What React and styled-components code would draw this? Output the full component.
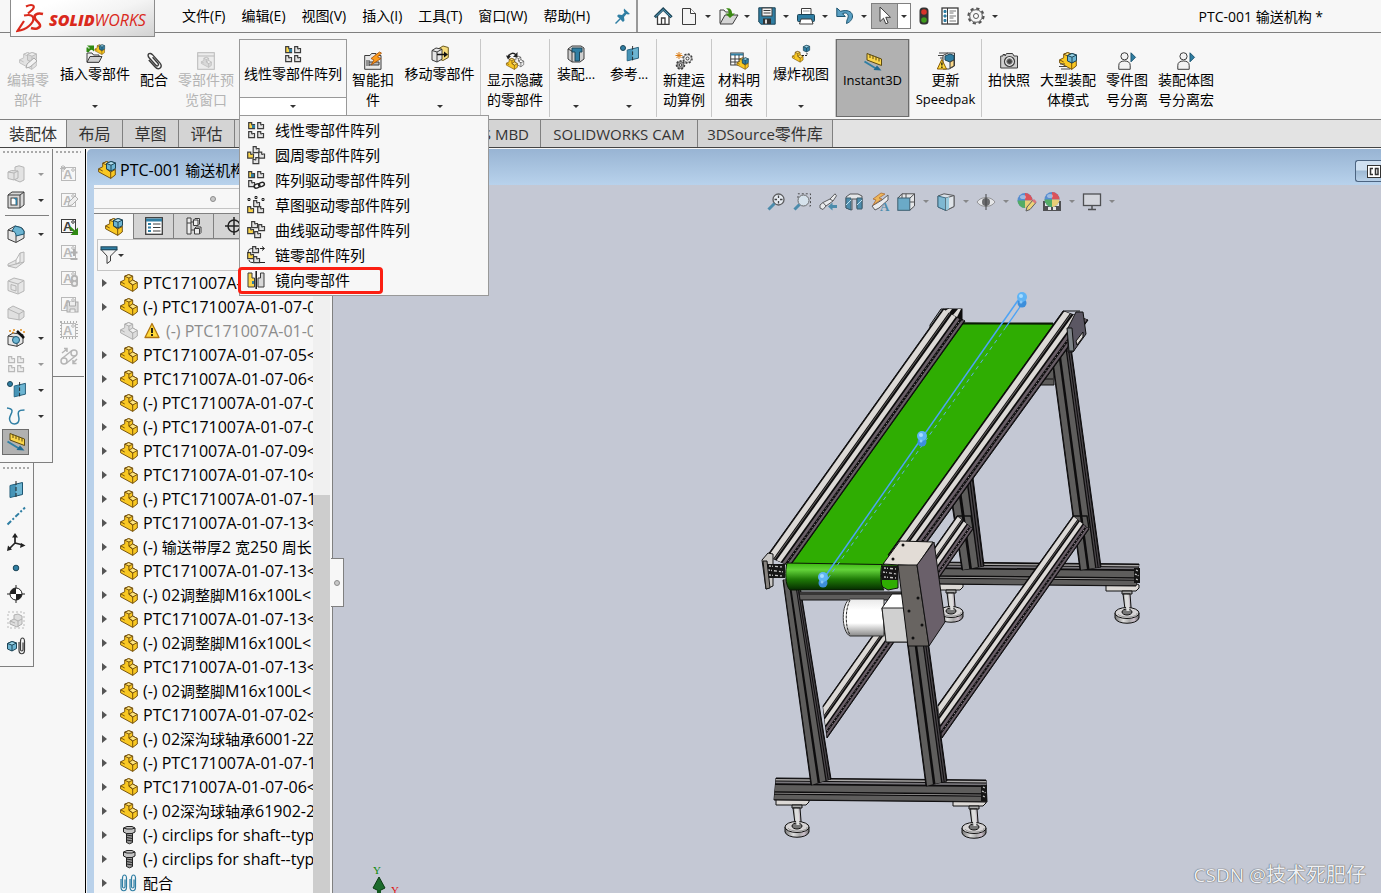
import React, { useState } from 'react';
import styled, { createGlobalStyle, css } from 'styled-components';

const GlobalStyle = createGlobalStyle`
  * {
    box-sizing: border-box;
  }
  body {
    margin: 0;
    background: #f7f7f7;
    color: #000;
    font-family: 'Open Sans', 'Noto Sans CJK SC', sans-serif;
    font-size: 14px;
  }
  button, input {
    font: inherit;
    color: inherit;
    margin: 0;
    padding: 0;
    border: 0;
    background: none;
  }
`;

const AppContainer = styled.div`
  height: 100vh;
  display: flex;
  flex-direction: column;
  overflow: hidden;
`;

const Svg = styled.svg`
  width: 18px;
  height: 18px;
  flex: none;
  display: block;
  overflow: visible;
`;

const Caret = styled.span`
  width: 0;
  height: 0;
  flex: none;
  border: 3px solid transparent;
  border-top-color: ${(p) => p.$color || '#333'};
  border-bottom: 0;
`;

const HanText = styled.span`
  font-size: ${(p) => p.$size}px;
`;

/* ---------- header ---------- */

const Header = styled.header`
  position: relative;
  display: flex;
  height: 33px;
  flex: none;
  border-bottom: 1px solid #808080;
`;

const Logo = styled.div`
  position: absolute;
  left: 10px;
  top: 0;
  z-index: 2;
  width: 145px;
  height: 37px;
  display: flex;
  align-items: center;
  padding-left: 5px;
  background: linear-gradient(160deg, #fff 20%, #f4f4f4 55%, #d2d2d2);
  border: solid #8c8c8c;
  border-width: 0 1px 1px;
  color: #da291c;
`;

const LogoText = styled.span`
  margin-left: 5px;
  padding-top: 4px;
  font-style: italic;
  font-weight: 400;
  font-size: 16px;
  line-height: 20px;
  b {
    font-weight: 800;
  }
`;

const MenuBar = styled.nav`
  display: flex;
  align-items: center;
  gap: 16px;
  width: 638px;
  flex: none;
  padding-left: 182px;
  border-right: 2px solid #999;
  button {
    white-space: nowrap;
    line-height: 20px;
  }
`;

const PinButton = styled.button`
  margin-left: 8px;
`;

const QuickBar = styled.div`
  display: flex;
  align-items: center;
  padding-left: 12px;
`;

const QuickButton = styled.button`
  width: 26px;
  height: 26px;
  display: flex;
  align-items: center;
  justify-content: center;
`;

const QuickCaret = styled.button`
  width: 12px;
  height: 26px;
  margin-right: 1px;
  display: flex;
  align-items: center;
  justify-content: center;
`;

const SelectGroup = styled.div`
  display: flex;
  border: 1px solid #808080;
  button:first-child {
    height: 24px;
    background: #b4b4b4;
    border-right: 1px solid #808080;
  }
  button:last-child {
    height: 24px;
    margin: 0;
    background: #fff;
  }
`;

const DocTitle = styled.div`
  margin-left: auto;
  align-self: center;
  padding-right: 58px;
  white-space: nowrap;
`;

/* ---------- ribbon ---------- */

const Ribbon = styled.section`
  display: flex;
  flex: none;
  height: 86px;
  padding-top: 6px;
`;

const RibbonSeparator = styled.span`
  width: 1px;
  height: 78px;
  background: #c8c8c8;
`;

const RibbonLabel = styled.span`
  margin-top: ${(p) => (p.$menu ? 1 : 0)}px;
`;

const RibbonButton = styled.button`
  width: ${(p) => p.$width}px;
  height: 78px;
  flex: none;
  display: flex;
  flex-direction: column;
  align-items: center;
  padding-top: ${(p) => (p.$menu ? 6 : 13)}px;
  font-size: 13px;
  line-height: 19px;
  white-space: pre;
  color: ${(p) => (p.disabled ? '#b4b4b4' : '#000')};
  ${Caret} {
    margin-top: auto;
    margin-bottom: 9px;
  }
  ${(p) =>
    p.$pressed &&
    css`
      padding-top: 13px;
      background: #b1b1b1;
      border: 1px solid #6c6c6c;
    `}
`;

const SplitWrap = styled.div`
  position: relative;
  width: 108px;
  height: 76px;
  margin-left: 1px;
  flex: none;
  border: 1px solid #999;
`;

const SplitTop = styled.button`
  display: flex;
  flex-direction: column;
  align-items: center;
  width: 100%;
  height: 57px;
  padding-top: 5px;
  line-height: 19px;
  white-space: nowrap;
`;

const SplitBottom = styled.button`
  display: flex;
  width: 100%;
  height: 18px;
  align-items: center;
  justify-content: center;
  background: #fff;
  border-top: 1px solid #999;
`;

const PatternMenu = styled.ul`
  position: absolute;
  z-index: 10;
  left: -1px;
  top: 75px;
  width: 250px;
  margin: 0;
  padding: 1px 2px 3px;
  list-style: none;
  background: #f7f7f7;
  border: 1px solid #999;
`;

const PatternItem = styled.li`
  position: relative;
  button {
    display: flex;
    align-items: center;
    gap: 10px;
    width: 100%;
    height: 25px;
    padding-left: 5px;
    font-size: 15px;
    line-height: 20px;
  }
`;

const Highlight = styled.span`
  position: absolute;
  left: -4px;
  top: 0;
  width: 145px;
  height: 27px;
  border: 3px solid #fb1f12;
  border-radius: 4px;
  pointer-events: none;
`;

/* ---------- command tabs ---------- */

const TabBar = styled.div`
  display: flex;
  flex: none;
  height: 29px;
  background: #e3e3e3;
  border-top: 1px solid #808080;
  border-bottom: 1px solid #444;
`;

const Tab = styled.button`
  width: ${(p) => p.$width}px;
  flex: none;
  font-size: 15px;
  line-height: 26px;
  white-space: nowrap;
  color: #333;
  background: ${(p) => (p.$active ? '#f7f7f7' : '#d4d4d4')};
  border-right: 1px solid #808080;
`;

/* ---------- left tool strips ---------- */

const Body = styled.div`
  display: flex;
  flex: 1;
  min-height: 0;
  padding-top: 1px;
`;

const Strips = styled.aside`
  width: 86px;
  flex: none;
  border-right: 1px solid #000;
`;

const StripRow = styled.div`
  display: flex;
  align-items: flex-start;
`;

const Strip = styled.div`
  width: ${(p) => p.$width}px;
  padding: ${(p) => (p.$lower ? 4 : 2)}px 0 7px;
  border-bottom: 1px solid #808080;
  border-right: ${(p) => (p.$open ? '0' : '1px solid #808080')};
  &::before {
    content: '';
    display: block;
    height: 2px;
    margin: 0 3px 8px;
    background: repeating-linear-gradient(90deg, #aaa 0 2px, transparent 2px 4px);
  }
`;

const StripItem = styled.div`
  display: flex;
  align-items: center;
  height: 26px;
  padding-left: 2px;
  button {
    width: 27px;
    height: 26px;
    display: flex;
    align-items: center;
    justify-content: center;
    background: ${(p) => (p.$pressed ? '#b1b1b1' : 'none')};
    border: ${(p) => (p.$pressed ? '1px solid #6c6c6c' : '0')};
  }
  ${Caret} {
    margin-left: 9px;
  }
`;

const StripRule = styled.div`
  height: 1px;
  margin: 2px 3px 5px 5px;
  background: #808080;
`;

/* ---------- document window ---------- */

const DocWindow = styled.main`
  flex: 1;
  min-width: 0;
  margin-left: 1px;
  display: flex;
  flex-direction: column;
  padding-left: 7px;
  background: #b9d1ea;
  border-radius: 5px 0 0 0;
  overflow: hidden;
`;

const WindowTitle = styled.div`
  height: 36px;
  flex: none;
  display: flex;
  align-items: center;
  gap: 4px;
  margin-left: -7px;
  padding: 6px 0 0 11px;
  font-size: 16px;
  line-height: 24px;
  background: linear-gradient(#98b4d3, #b8d2ec);
`;

const WindowButton = styled.button`
  margin-left: auto;
  align-self: flex-start;
  margin-top: 5px;
  width: 26px;
  height: 22px;
  padding-left: 11px;
  border: 1px solid #4c6481;
  border-right: 0;
  border-radius: 3px 0 0 3px;
  background: linear-gradient(#cfe0f1 45%, #9db9d4 50%, #b8d0e8);
`;

const Workspace = styled.div`
  flex: 1;
  min-height: 0;
  display: flex;
`;

const Panel = styled.section`
  position: relative;
  z-index: 1;
  width: 239px;
  flex: none;
  display: flex;
  flex-direction: column;
  background: #f7f7f7;
  border-right: 1px solid #808080;
`;

const PanelGrip = styled.div`
  height: 21px;
  margin: 3px 0 4px;
  flex: none;
  display: flex;
  align-items: center;
  justify-content: center;
  border: solid #c4c4c4;
  border-width: 1px 0;
`;

const Dot = styled.span`
  width: 6px;
  height: 6px;
  border-radius: 50%;
  border: 1px solid #8c8c8c;
  background: #c8c8c8;
`;

const PanelTabs = styled.div`
  display: flex;
  flex: none;
  height: 26px;
  border-top: 1px solid #808080;
  background: #d4d4d4;
`;

const PanelTab = styled.button`
  width: 40px;
  display: flex;
  align-items: center;
  justify-content: center;
  background: ${(p) => (p.$active ? '#f7f7f7' : '#d4d4d4')};
  border-right: 1px solid #808080;
  border-bottom: ${(p) => (p.$active ? '0' : '1px solid #808080')};
`;

const FilterBar = styled.label`
  display: flex;
  align-items: center;
  flex: none;
  height: 32px;
  margin: 0 3px;
  padding-left: 2px;
  border: 1px solid #c4c4c4;
  input {
    width: 100%;
    min-width: 0;
    outline: 0;
  }
`;

const TreeArea = styled.div`
  flex: 1;
  min-height: 0;
  display: flex;
  overflow: hidden;
`;

const Tree = styled.ul`
  width: 219px;
  margin: 0;
  padding: 0;
  list-style: none;
  overflow: hidden;
`;

const TreeRow = styled.li`
  display: flex;
  align-items: center;
  height: 24px;
  padding-left: 8px;
  gap: 5px;
  font-size: 16px;
  line-height: 24px;
  white-space: pre;
  color: ${(p) => (p.$dim ? '#8c8c8c' : '#000')};
`;

const Twisty = styled.button`
  width: 13px;
  height: 24px;
  flex: none;
  display: flex;
  align-items: center;
  &::before {
    content: '';
    border: 4px solid transparent;
    border-left: 5px solid #555;
    border-right: 0;
    visibility: ${(p) => (p.$hidden ? 'hidden' : 'visible')};
  }
`;

const ScrollTrack = styled.div`
  width: 17px;
  display: flex;
  flex-direction: column;
  justify-content: flex-end;
  background: #f0f0f0;
`;

const ScrollThumb = styled.div`
  height: 64%;
  background: #cdcdcd;
`;

const PanelHandle = styled.button`
  position: absolute;
  left: 237px;
  top: 373px;
  width: 13px;
  height: 49px;
  display: flex;
  align-items: center;
  justify-content: center;
  background: #f7f7f7;
  border: 1px solid #808080;
  border-left: 0;
`;

const Viewport = styled.section`
  position: relative;
  flex: 1;
  min-width: 0;
  display: flex;
  flex-direction: column;
  background: #c4c8d4;
  overflow: hidden;
`;

const ViewBar = styled.div`
  display: flex;
  align-items: center;
  flex: none;
  height: 33px;
  padding-left: 430px;
  opacity: 0.8;
  button {
    width: 26px;
    height: 26px;
    flex: none;
    display: flex;
    align-items: center;
    justify-content: center;
  }
  ${Caret} {
    margin: 0 4px;
  }
`;

const Scene = styled.svg`
  display: block;
  flex: 1;
  width: 100%;
  min-height: 0;
`;

const Watermark = styled.div`
  position: absolute;
  right: 15px;
  bottom: 5px;
  font-size: 19px;
  line-height: 26px;
  color: #eef0f4;
  text-shadow: 0 0 1px #555, 0 0 1px #555;
`;

/* ---------- icons, drawn on an 18 x 18 grid ---------- */

const K = '#3c3c3c';
const B = '#2f7ea3';
const BL = '#6db5d2';
const Y = '#f9c823';

const Block = ({ fill = Y, light = '#fde27a', stroke = '#6b4708' }) => (
  <g stroke={stroke} strokeLinejoin="round" strokeWidth=".9">
    <path d="M4.700 2.200 8.700 .6 12.700 2.200V6L17.300 8.500V14L12.700 17.400 .6 10.800V7.800L4.700 5.800Z" fill={fill} />
    <path d="M4.700 2.200 8.700 .6 12.700 2.200 8.900 4ZM8.900 8.200 12.700 6 17.300 8.500 12.700 11Z" fill={light} />
    <path d="M8.900 4V8.200L12.700 11V17.400M.6 7.800 4.700 10" fill="none" />
  </g>
);

const Cube = ({ x = 8, y = 0, fill = B, light = '#9ad6ea', stroke = '#1d4557' }) => (
  <g transform={`translate(${x} ${y})`} stroke={stroke} strokeLinejoin="round">
    <path d="M.5 2.500 5 .5 9.500 2v5.500L5 10 .5 8Z" fill={fill} />
    <path d="M.5 2.500 5 .5 9.500 2 5 4.200Z" fill={light} />
    <path d="M5 4.200V10" fill="none" />
  </g>
);

// notched plate used by every pattern icon
const Notch = ({ x, y, fill = '#e4e4e4', stroke = K, flip }) => (
  <path
    transform={`translate(${x} ${y})${flip ? ' translate(7 0) scale(-1 1)' : ''}`}
    d="M.7 .7h3v1.500c0 1 .8 1 1.300.3h1.500v4.200H.7Z"
    fill={fill}
    stroke={stroke}
    strokeWidth="1.200"
  />
);

const Note = ({ children, color = '#b9b9b9' }) => (
  <>
    <rect x="1.500" y="2.500" width="14" height="13" fill="none" stroke={color} />
    <text x="3" y="14" fontFamily="Liberation Sans, sans-serif" fontSize="13" fontWeight="bold" fill={color}>A</text>
    <circle cx="13" cy="5" r="1.300" fill="none" stroke={color} />
    {children}
  </>
);

const Person = () => (
  <g stroke={K} fill="#f2f2f2">
    <path d="M.8 17.300v-4C.8 10.500 3 9 6.500 9s5.700 1.500 5.700 4.300v4Z" />
    <circle cx="6.500" cy="4.300" r="3.600" />
    <path d="M13 .8 17.500 5.300 13 9.800Z" fill={B} stroke="#1d5672" />
  </g>
);

const Ruler = () => (
  <>
    <path d="M3 .5 17.500 6V12.500L3 7Z" fill="#fbd64b" stroke="#5c4a10" />
    <path d="M6 1.500v3.500M9 2.600v3.500M12 3.800v3.500M15 5v3.500" stroke="#5c4a10" />
    <path d="M.5 8.500 12 15.500" stroke={B} strokeWidth="2" />
    <path d="M17.500 17.500 9.500 17 13 12.500Z" fill="#1f6a92" />
  </>
);

const Plane = ({ x = 0 }) => (
  <g transform={`translate(${x} 0)`}>
    <path d="M3 4.500 15.500 1.500v12L3 16.500Z" fill={BL} stroke="#1d5672" />
    <path d="M3 4.500 9 3v12L3 16.500Z" fill={B} opacity=".6" />
    <path d="M9 0v18" stroke="#222" strokeDasharray="4 2" />
  </g>
);

const Clip = ({ color = K, x = 0 }) => (
  <path
    transform={`translate(${x} 0)`}
    d="M2 5v8c0 5 5.500 5 5.500 0V4C7.500 0 3.500 0 3.500 4v8.500c0 2 2.500 2 2.500 0V5.500"
    fill="none"
    stroke={color}
    strokeWidth="1.200"
  />
);

const Gear = ({ x, y, r, fill = '#f2f2f2' }) => (
  <g transform={`translate(${x} ${y})`} stroke={K} fill={fill}>
    <circle r={r} strokeWidth="1.500" strokeDasharray="2 1.500" />
    <circle r={r - 0.7} strokeWidth=".6" />
    <circle r={r / 3} fill="#fff" />
  </g>
);

const Ball = () => (
  <g>
    <circle cx="8" cy="7.500" r="7.500" fill="#3c7fd0" />
    <path d="M8 7.500V0a7.500 7.500 0 0 1 7.500 7.500Z" fill="#e0363c" />
    <path d="M8 7.500H.5A7.500 7.500 0 0 0 8 15Z" fill="#37a64a" />
    <path d="M8 7.500h7.500A7.500 7.500 0 0 1 8 15Z" fill="#f0d060" />
    <ellipse cx="6" cy="4" rx="3" ry="2" fill="#fff" opacity=".45" />
  </g>
);

const icons = {
  part: <Block />,
  partGray: <Block fill="#dedede" light="#efefef" stroke="#a8a8a8" />,
  assembly: <><Block /><Cube x={8} y={0} fill={BL} light="#b5e2f2" /></>,
  pin: <g transform="translate(-1 -1)"><path d="M11 2.500 17 8l-2 .5-1.500-.5-2.500 3 .5 3.500L10 16 4 10l1.500-1.500 3.500.5L11.500 6.500l-.8-1.500Z" fill={B} /><path d="M7 13 2.500 17.500" stroke={B} strokeWidth="1.500" /></g>,
  home: <><path d="M3.500 9v8.300h11.500V9" fill="#fff" stroke={K} strokeWidth="1.300" /><path d="M7.500 17v-6H11v6" fill="none" stroke={K} strokeWidth="1.300" /><path d="M.8 10.200 9.200 2l8.400 8.200" fill="none" stroke="#1d4557" strokeWidth="3" /><path d="M1.500 9.800 9.200 2.500l7.700 7.300" fill="none" stroke="#5ba4c5" /></>,
  file: <><path d="M2.500 1.500h8l5 5v11h-13Z" fill="#f4f4f4" stroke={K} strokeLinejoin="round" /><path d="M10.500 1.500v5h5" fill="#fff" stroke={K} /></>,
  open: <><path d="M1 16V3h4l1.500 2H12v3" fill="#eee" stroke={K} /><path d="M1 17 6 8h13l-5.500 9Z" fill="#d5d5d5" stroke={K} /><path d="M7 1.500c4-1 6 1 6 5h3l-5 4.500L6.500 6.500H9.500C10 4 9 2.500 7 1.500Z" fill="#3a8a12" /></>,
  save: <><path d="M.8 .8h16.400v16.400H3L.8 15Z" fill={B} stroke="#1d4557" /><rect x="4" y="1" width="10" height="8" fill="#f4f4f4" stroke={K} /><path d="M5.500 3.500h7M5.500 6h7" stroke={K} /><rect x="5" y="11.500" width="8" height="5.500" fill="#333" /><rect x="7" y="12.500" width="2" height="4" fill="#ddd" /></>,
  print: <><path d="M4.500 8V1.500h9.500V8" fill="#fff" stroke={K} /><path d="M6 4h6.500" stroke="#999" /><rect x=".5" y="7.500" width="17" height="7" rx="1" fill={B} stroke="#1d4557" /><path d="M4 12h10.500l1.500 5H2.500Z" fill="#fff" stroke={K} /></>,
  undo: <path d="M.8 1v8.500h8.500L6.500 6.700C11 4.500 14 8 11 13l-.5 3.500C20 13 18.500 .5 4.500 4.300Z" fill="#5aa0c4" stroke="#1d5672" strokeLinejoin="round" />,
  cursor: <path d="M4 0v14.500l3.500-3.300 2.300 5.600 2.300-1-2.300-5.500H14.500Z" fill="#fff" stroke={K} strokeLinejoin="round" />,
  traffic: <><rect x="4.500" y=".5" width="9" height="17" rx="3.500" fill="#333" /><circle cx="9" cy="5" r="2.800" fill="#d8342a" /><circle cx="9" cy="13" r="2.800" fill="#3f9c1c" /></>,
  list: <><rect x="1" y="1" width="16" height="16" fill="#fff" stroke={K} strokeWidth="1.300" /><path d="M6.500 1v16" stroke={K} /><path d="M8.500 4h6.500M8.500 9h6.500M8.500 14h6.500M8.500 6h4M8.500 11h4" stroke="#777" /><path d="M3 3.500h2v2H3ZM3 8h2v2H3ZM3 12.500h2v2H3Z" fill={B} stroke={B} /></>,
  gear: <><circle cx="9" cy="9" r="7.500" fill="none" stroke="#555" strokeWidth="2.200" strokeDasharray="3.200 2.690" /><circle cx="9" cy="9" r="6.300" fill="#f7f7f7" stroke="#555" /><circle cx="9" cy="9" r="2.500" fill="#fff" stroke="#555" /></>,

  editPart: <><Block fill="#e2e2e2" light="#eee" stroke="#bdbdbd" /><Cube x={8} y={0} fill="#d8d8d8" light="#eee" stroke="#bdbdbd" /><path d="m7 16 1-4 7-6 3 3-7 6Z" fill="#f3f3f3" stroke="#aaa" /></>,
  insertPart: <><path d="M1 17V8h5l1.500 2H13v7Z" fill="#eee" stroke={K} /><path d="M1 17.300 4 11.500h12l-3 5.800Z" fill="#cfcfcf" stroke={K} /><path d="M1.500 7V2.500M2 7C2.500 5 4 3.500 7 3.500" fill="none" stroke="#2f8a12" strokeWidth="2" /><path d="M1 .5h7v6Z" fill="#2f8a12" /><g transform="translate(8.500 -.5) scale(.58)"><Block /><Cube /></g></>,
  mate: <g transform="rotate(-42 9 9) translate(3.500 -1) scale(1.150)"><Clip x={0} /></g>,
  preview: <><rect x=".7" y=".7" width="16.600" height="16.600" fill="#ececec" stroke="#b9b9b9" /><path d="M.7 4h16.600" stroke="#b9b9b9" /><g transform="translate(4 5) scale(.6)"><Block fill="#d8d8d8" light="#eee" stroke="#b0b0b0" /></g></>,
  linear: <><Notch x={1} y={1} fill="#fbd64b" /><Notch x={10} y={1} /><Notch x={1} y={10} /><Notch x={10} y={10} /><path d="M5 4h3v3H5Z" fill={B} /></>,
  fastener: <><path d="M.7 3.500H6l1.500-2H12v2h5v13.800H.7Z" fill="#e8e8e8" stroke={K} /><path d="M3 8v6M5 8v6M5 10h10v3H5" fill="#bbb" stroke={K} /><path d="M15.500 0 7 6.500l3 1.500-3 5 10-6.500-3.500-1.500L17.500 1Z" fill="#fb9b1c" stroke="#a14a05" strokeWidth=".8" /></>,
  move: <><path d="M8 3.500 12 1l5.300 1.500v10L12 15.500 8 14Z" fill="#f7dd7c" stroke="#6b5a20" /><path d="M1 5.500 5 3l6 1.200v10L6 17 1 15Z" fill="#e6e6e6" stroke={K} /><path d="M1 5.500 6 7l5-2.800M6 7v10" fill="none" stroke={K} /><path d="M6 9.500h8" stroke="#111" strokeWidth="1.500" /><path d="m13 6.500 4 3-4 3Z" fill="#111" /></>,
  showHide: <><g transform="translate(7 4) scale(.62)"><Block fill="#eee" light="#fff" stroke={K} /></g><g transform="translate(0 6) scale(.66)"><Block /></g><path d="M2 5C4 .5 8 .5 10 3" fill="none" stroke="#222" strokeWidth="1.500" /><path d="M0 3.500 5 4 2 7.500ZM11.500 0v5H7Z" fill="#222" /></>,
  asmFeature: <><path d="M1 4 5 1h9l3 2v11l-4 3H5l-4-3Z" fill="#cfcfcf" stroke={K} /><path d="M1 4 5 6v11" fill="none" stroke={K} /><path d="M5 3h10v4h-2.500v9H8V7H5Z" fill={B} stroke="#1d4557" /></>,
  refGeom: <><circle cx="3" cy="3" r="2.500" fill={B} stroke="#1d4557" /><g transform="translate(4.500 1) scale(.9)"><Plane /></g></>,
  motion: <><Gear x={12.500} y={6.500} r={4.500} /><Gear x={5.500} y={13} r={4} fill="#aaa" /><path d="M4 0v7M.5 3.500h7M1.500 1l5 5M6.500 1l-5 5" stroke="#d97a12" /></>,
  bom: <><rect x=".7" y="1" width="12.500" height="12" fill="#fff" stroke={K} /><path d="M.7 1.500h12.500v2H.7Z" fill={B} /><path d="M.7 7H13M.7 10H13M5 3v10M9 3v10" stroke={K} /><g transform="translate(6.500 5.500) scale(.68)"><Block /><Cube /></g></>,
  explode: <><g transform="translate(0 6) scale(.64)"><Block /></g><g transform="translate(11 0) scale(.7)"><Cube x={0} y={0} fill={B} /></g><path d="M10 10.500h5V8" fill="none" stroke="#222" strokeDasharray="2 1" /></>,
  instant: <Ruler />,
  speedpak: <><path d="M2 1h9M1 3.500h7M3 6h4" stroke="#444" strokeWidth="1.200" /><path d="M6 3.500 11 1h6.500v13L12 17H6Z" fill="#f4f4f4" stroke={K} /><path d="M8 4 13 2l4 1.500V8l-4 2-5-2Z" fill={B} stroke="#1d4557" /><path d="M13 10v6l4-2V8Z" fill="#fbd98a" stroke={K} /><path d="M4.800 7.500 9.500 17H.3Z" fill="#ffd93b" stroke="#8a5a00" /><path d="M4.900 10.500v3M4.900 14.500v1.500" stroke="#111" strokeWidth="1.300" /></>,
  camera: <><path d="M.7 4H3V2.500h2V4l1.500-2.500h6L14 4h3.500v12H.7Z" fill="#d0d0d0" stroke={K} /><circle cx="9.500" cy="9.500" r="5" fill="#eee" stroke={K} strokeWidth="1.200" /><circle cx="9.500" cy="9.500" r="2.800" fill="#444" stroke="#888" /></>,
  largeAsm: <><Block /><Cube x={8} y={1} fill={BL} /><path d="M1 12h5M0 14.500h8M2 17h9" stroke="#444" /></>,
  person: <Person />,

  circular: <><Notch x={5.500} y={0} /><Notch x={11} y={5.500} /><Notch x={5.500} y={11} flip /><Notch x={0} y={5.500} fill="#fbd64b" /></>,
  driven: <><Notch x={1} y={0} fill="#fbd64b" /><Notch x={10} y={0} /><Notch x={1} y={9} /><path d="M4 3h3v3H4Z" fill={B} /><ellipse cx="10" cy="15" rx="3" ry="2" fill="none" stroke="#222" strokeWidth="1.400" transform="rotate(-20 10 15)" /><ellipse cx="14.500" cy="13.500" rx="3" ry="2" fill="none" stroke="#222" strokeWidth="1.400" transform="rotate(-20 14.500 13.500)" /></>,
  sketch: <><Notch x={0} y={10} fill="#fbd64b" /><Notch x={10} y={10} /><Notch x={6} y={4} /><path d="M1 2.500h2v2H1ZM8 .5h2v2H8ZM15 2.500h2v2h-2Z" fill="none" stroke="#222" /></>,
  curve: <><Notch x={4} y={0} /><Notch x={11} y={3} /><Notch x={0} y={6} fill="#fbd64b" /><Notch x={7} y={10} /></>,
  chain: <><Notch x={5} y={0} /><Notch x={6} y={10} /><Notch x={0} y={6} fill="#fbd64b" /><path d="M6 2.500C1 2.500 1 5 1.500 7M13 2.500h4M15 .5l2.500 2-2.500 2M2 14c0 2.500 3 2.500 4 2.500M13 16.500h5" fill="none" stroke="#222" /></>,
  mirror: <><path d="M1 2h4v5h2.500v9H1Z" fill="#fbd64b" stroke={K} /><path d="M5 10h2v3H5Z" fill={B} /><path d="M17 2h-3.500v5H11v9h6Z" fill="#d8d8d8" stroke={K} /><path d="M9.200 0v18" stroke="#111" strokeWidth="1.500" /></>,

  boxes: <g fill="#e3e3e3" stroke="#b5b5b5"><path d="M8 2 12 .8l5 1.500V15l-4 2-5-2Z" /><path d="M1 7 4.500 5.500 11 6v7l-4 2-6-1.500Z" /><path d="M1 7l6 1v7M7 8l4-2" fill="none" /></g>,
  cut: <><path d="M1 4 5 1h12v13l-4 3H1Z" fill="#d8d8d8" stroke={K} /><path d="M1 4h12v13M13 4l4-3" fill="none" stroke={K} /><rect x="4" y="7" width="6" height="7" fill="#fff" stroke={K} /><path d="M6.500 7H10v7H8.500V9Z" fill={B} /></>,
  fillet: <><path d="M1 5 8 1l7 2 2 3v7l-8 4.500L1 14Z" fill="#e6e6e6" stroke={K} /><path d="M8 1l6 1.500L17 6v3l-8 2c0-3-1-4.500-4-5Z" fill={BL} stroke="#1d5672" /><path d="M9 11v6M1 5l5 1.500" fill="none" stroke={K} /></>,
  rib: <path d="M1 13 9 9 13 2l4-1v10l-8 6-8-2ZM9 9v4l4-2V2M1 15l8-2 8-2" fill="#e6e6e6" stroke="#b5b5b5" strokeLinejoin="round" />,
  shell: <g fill="#e6e6e6" stroke="#b5b5b5"><path d="M1 4 7 1l10 2.500V14L11 17 1 13.500Z" /><path d="M4 7.500 9 9v5L4 12.500ZM1 4l10 3v10M11 7l6-3.500" /></g>,
  draft: <path d="M1 6 6 3l11 5v6l-4 3-12-2Zm0 0 11 5v6M12 11l5-3" fill="#e0e0e0" stroke="#b5b5b5" />,
  wizard: <><path d="M1 7 6 4l10 1.500V14l-6 3.300L1 15.500Z" fill="#e6e6e6" stroke={K} /><path d="M1 7l9 1.500v9" fill="none" stroke={K} /><circle cx="9" cy="11" r="3.500" fill={BL} stroke="#1d5672" /><path d="m10 2 7 7" stroke="#111" strokeWidth="2.500" /><path d="M2 2h2M6 1h2M5 3.500h2M13 1h2M16 3h2" stroke="#e08a1a" strokeWidth="1.500" /></>,
  linearGray: <><Notch x={1} y={1} stroke="#b9b9b9" fill="#eee" /><Notch x={10} y={1} stroke="#b9b9b9" fill="#eee" /><Notch x={1} y={10} stroke="#b9b9b9" fill="#eee" /><Notch x={10} y={10} stroke="#b9b9b9" fill="#eee" /></>,
  spline: <path d="M0 1c10 1 2 7 2.500 11 .8 6.500 9.500 6.500 9.500 0C12 8 8 3 17.500 3" fill="none" stroke={B} strokeWidth="1.500" />,

  noteNew: <Note><path d="M3 0v7M0 3.500h6M1 1l4 4M5 1 1 5" stroke="#b9b9b9" /></Note>,
  noteEdit: <Note><path d="m8 15 1-4 6-6 3 3-6 6Z" fill="#eee" stroke="#b0b0b0" /></Note>,
  noteMove: <Note color={K}><path d="M10.500 9.500 15 13.500 18 10.500V18H10.500L13.500 15 9 11Z" fill="#2f8a12" /></Note>,
  notePlus: <Note><path d="M14 6v7M10.500 9.500h7M10.500 16h7" stroke="#b0b0b0" strokeWidth="2" /></Note>,
  noteLight: <Note><rect x="11" y="6" width="7" height="12" rx="3" fill="#b5b5b5" /><circle cx="14.500" cy="9.500" r="1.700" fill="#eee" /><circle cx="14.500" cy="14.500" r="1.700" fill="#eee" /></Note>,
  noteSave: <Note><rect x="7" y="7" width="11" height="10" fill="#ddd" stroke="#aaa" /><path d="M9.500 7v4h6V7M10 17v-3h5v3" fill="#eee" stroke="#aaa" /></Note>,
  noteBox: <Note><rect x="1" y="1" width="16" height="16" fill="none" stroke="#b0b0b0" strokeWidth="2" strokeDasharray="1 2" /></Note>,
  belt: <g fill="none" stroke="#b5b5b5" strokeWidth="1.500"><circle cx="4" cy="14" r="3" /><circle cx="14" cy="6" r="3" /><path d="m2 11.500 10-8M6 16.500l10-8M2 6l5-4M7 5V1.500H4M17 12l-4 4M13 13v3.500h3.500" /></g>,

  plane: <Plane />,
  axis: <path d="M.5 17.500 18 .5" stroke={B} strokeWidth="2" strokeDasharray="5 2 2 2" />,
  triad: <g stroke="#222" strokeWidth="1.700" fill="#222"><path d="M8 10V3M8 10l-6 6M8 10l8 2" /><path d="M8 0 5 4.500h6ZM0 18l1-5.500 4 4ZM18.500 12.500 13 15l1-5Z" stroke="none" /></g>,
  point: <circle cx="9" cy="9" r="2.800" fill={B} stroke="#1d4557" />,
  com: <><path d="M9 0v18M0 9h18" stroke="#222" /><circle cx="9" cy="9" r="6" fill="#fff" stroke="#222" /><path d="M9 9V3a6 6 0 0 0-6 6ZM9 9v6a6 6 0 0 0 6-6Z" fill="#222" /></>,
  envelope: <><rect x="1" y="1" width="16" height="16" fill="none" stroke="#bbb" strokeDasharray="2 2" /><path d="m3 10 4-2V4l4-1 4 2v8l-5 3-7-3Z" fill="#ddd" stroke="#b0b0b0" /><path d="m7 8 4 2 4-2M11 10v6M3 10l5 2" fill="none" stroke="#b0b0b0" /></>,
  mateRef: <><Cube x={0} y={4} fill={BL} stroke="#1d4557" /><Clip x={10} /></>,

  propTab: <><rect x=".7" y=".7" width="16.600" height="16.600" fill="#fff" stroke={K} strokeWidth="1.300" /><path d="M1 3h16" stroke={B} strokeWidth="3" /><path d="M3 7h3M3 10.500h3M3 14h3" stroke={B} strokeWidth="2" /><path d="M8 7h7.500M8 10.500h7.500M8 14h7.500" stroke={K} /></>,
  configTab: <g fill="#eee" stroke={K}><path d="M2 1h4v16H2ZM2 6h4" /><path d="M6 5h3M6 13h3" /><path d="M8.500 3 10 1.500h4.500V7L13 8.500H8.500ZM9.500 11.500 11 10h5v5.500L14.500 17h-5Z" /><path d="M8.500 3H13v5.500M9.500 11.500h5V17" fill="none" /></g>,
  dimTab: <><circle cx="9" cy="9" r="6" fill="none" stroke="#222" strokeWidth="1.500" /><path d="M9 0v18M0 9h18" stroke="#222" strokeWidth="1.500" /></>,
  funnel: <><path d="M1 3.500 7 10v7.500l3.500-2.500v-5L17 3.500Z" fill="#f2f2f2" stroke={K} /><rect x="1" y=".8" width="16" height="3" fill={B} stroke="#1d4557" /></>,
  warn: <><path d="M9 1.500 16 15.500H2Z" fill="#ffd93b" stroke="#b07510" strokeLinejoin="round" strokeWidth="1.300" /><path d="M9 6v5M9 12v2" stroke="#111" strokeWidth="1.800" /></>,
  bolt: <><path d="M6.500 6h6v10.500l-3 1.300-3-1.300Z" fill="#999" stroke="#222" /><path d="M6.500 9l6 1M6.500 11.500l6 1M6.500 14l6 1" stroke="#222" /><path d="M3.500 2 7 .5h5L15 2v4l-3 1.500H6.500L3.500 6Z" fill="#c4c4c4" stroke="#222" /><path d="M3.500 2 7 3h5l3-1" fill="none" stroke="#222" /></>,
  mates: <><Clip color={B} x={-1} /><Clip color={B} x={8} /></>,

  zoomFit: <><circle cx="11.500" cy="6.500" r="5.500" fill="#eef3f8" stroke="#444" strokeWidth="1.300" /><path d="m7.500 10.500-6 6" stroke={B} strokeWidth="3" /><path d="M11.500 2.500v2.500M11.500 8v2.500M7.500 6.500H10M13 6.500h2.500" stroke="#222" strokeWidth="1.300" /></>,
  zoomArea: <><path d="M5 5V.8h12.500V13H15" fill="none" stroke="#333" strokeDasharray="2 2" /><circle cx="10.500" cy="7.500" r="5.500" fill="#dbe9f2" stroke="#555" /><path d="m6.500 11.500-5 5" stroke={B} strokeWidth="3" /></>,
  prevView: <><path d="M1 12 4 9.500 11 6 16 .8l1.500 2L14 8 7 13l-3 3.500L1 15Z" fill="#f4f4f4" stroke="#444" /><path d="M4 9.500 7 13M11 6l3 2" stroke="#444" /><path d="M18 13.500h-5" stroke={B} strokeWidth="3" /><path d="M9 13.500 13.500 9.500v8Z" fill={B} /></>,
  section: <><path d="M1 4 5 1h8l4 2v12h-5V6H7v11L1 15Z" fill="#eee" stroke={K} /><path d="M1 5h5v12L1 15ZM12 5h5v11h-5Z" fill={B} stroke="#1d4557" /><path d="m1 12 5-5M12 12l5-5" stroke="#bfe6f5" /></>,
  annot: <><path d="M1 13 11 7l6-5v5L8 15l-4 2Z" fill="#f4f4f4" stroke="#444" /><path d="M10 0 2 6l3 1-3 5 9-6-3-1 6-4Z" fill="#f8b23a" stroke="#a14a05" strokeWidth=".7" /><text x="9" y="18" fontFamily="Liberation Serif, serif" fontSize="13" fontWeight="bold" fill={B}>A</text></>,
  orient: <><path d="M1 5 5 .8h12.500V13L13 17M5 .8V5M9 .8V5M13 5l4.500-4.200M13 9h4.500" fill="#eee" stroke="#333" /><rect x=".8" y="5" width="12" height="12.300" fill="#56a3c4" stroke="#1d4557" /></>,
  display: <><path d="M1 3 7 .8 17 2.500v11L9 17.500 1 14Z" fill="#dfe7ec" stroke={K} /><path d="M1 3 9 5v12.500L1 14Z" fill={BL} stroke="#1d5672" /><path d="M9 5 17 2.500v11L9 17.500Z" fill="#e6ecef" stroke={K} /><path d="M9 5 12 4v12l-3 1.500Z" fill="#8fcbe0" /></>,
  eye: <><path d="M0 9c4-6 14-6 18 0-4 6-14 6-18 0Z" fill="#eee" stroke="#888" /><circle cx="9" cy="9" r="4" fill="#555" /><path d="M9 1v16" stroke="#222" /></>,
  appearance: <><Ball /><path d="m9 18 1-4 6-7 3 2.500-6 7Z" fill="#f8d660" stroke="#444" /><path d="m15 8 3 2.500 1.500-2L17 6Z" fill="#e0646a" /></>,
  sceneBall: <><rect x="0" y="8" width="18" height="10" fill="#333" /><path d="M2 10h3v3H2ZM13 10h3v3h-3ZM5 14h3v3H5ZM10 14h3v3h-3Z" fill="#eee" /><g transform="translate(1 -1)"><Ball /></g></>,
  monitor: <><rect x=".5" y="1" width="17" height="11.500" fill="#d8dade" stroke="#333" strokeWidth="1.300" /><path d="M9 13v3M5 16.500h8" stroke="#333" strokeWidth="1.500" /></>,
};

const Icon = ({ name }) => (
  <Svg viewBox="0 0 18 18" aria-hidden="true">
    {icons[name]}
  </Svg>
);

// Chinese runs are set at their own size next to the Latin text
const Mixed = ({ text, size }) =>
  text
    .split(/([\u4e00-\u9fff]+)/)
    .filter(Boolean)
    .map((run, i) => (/[\u4e00-\u9fff]/.test(run) ? <HanText key={i} $size={size}>{run}</HanText> : run));

/* ---------- data ---------- */

const menus = ['文件(F)', '编辑(E)', '视图(V)', '插入(I)', '工具(T)', '窗口(W)', '帮助(H)'];

const quickTools = [
  { icon: 'file', label: '新建' },
  { icon: 'open', label: '打开' },
  { icon: 'save', label: '保存' },
  { icon: 'print', label: '打印' },
  { icon: 'undo', label: '撤消' },
];

const ribbonLeft = [
  { icon: 'editPart', text: '编辑零\n部件', width: 56, disabled: true },
  { icon: 'insertPart', text: '插入零部件', width: 78, menu: true },
  { icon: 'mate', text: '配合', width: 40 },
  { icon: 'preview', text: '零部件预\n览窗口', width: 64, disabled: true },
];

const ribbonRight = [
  { icon: 'fastener', text: '智能扣\n件', width: 52 },
  { icon: 'move', text: '移动零部件', width: 81, menu: true, sep: true },
  { icon: 'showHide', text: '显示隐藏\n的零部件', width: 68, sep: true },
  { icon: 'asmFeature', text: '装配...', width: 52, menu: true },
  { icon: 'refGeom', text: '参考...', width: 54, menu: true, sep: true },
  { icon: 'motion', text: '新建运\n动算例', width: 54, sep: true },
  { icon: 'bom', text: '材料明\n细表', width: 54, sep: true },
  { icon: 'explode', text: '爆炸视图', width: 68, menu: true, sep: true },
  { icon: 'instant', text: 'Instant3D', width: 73, pressed: true, sep: true },
  { icon: 'speedpak', text: '更新\nSpeedpak', width: 71, sep: true },
  { icon: 'camera', text: '拍快照', width: 54 },
  { icon: 'largeAsm', text: '大型装配\n体模式', width: 64 },
  { icon: 'person', text: '零件图\n号分离', width: 54 },
  { icon: 'person', text: '装配体图\n号分离宏', width: 64 },
];

const patterns = [
  { icon: 'linear', text: '线性零部件阵列' },
  { icon: 'circular', text: '圆周零部件阵列' },
  { icon: 'driven', text: '阵列驱动零部件阵列' },
  { icon: 'sketch', text: '草图驱动零部件阵列' },
  { icon: 'curve', text: '曲线驱动零部件阵列' },
  { icon: 'chain', text: '链零部件阵列' },
  { icon: 'mirror', text: '镜向零部件' },
];

const commandTabs = [
  { text: '装配体', width: 67 },
  { text: '布局', width: 56 },
  { text: '草图', width: 56 },
  { text: '评估', width: 56 },
  { text: 'SOLIDWORKS 插件', width: 150 },
  { text: 'SOLIDWORKS MBD', width: 156 },
  { text: 'SOLIDWORKS CAM', width: 157 },
  { text: '3DSource零件库', width: 135 },
];

const featureStrip = [
  { icon: 'boxes', caret: '#999' },
  { icon: 'cut', caret: '#333', rule: true },
  { icon: 'fillet', caret: '#333' },
  { icon: 'rib' },
  { icon: 'shell' },
  { icon: 'draft' },
  { icon: 'wizard', caret: '#333' },
  { icon: 'linearGray', caret: '#999' },
  { icon: 'refGeom', caret: '#333' },
  { icon: 'spline', caret: '#333' },
  { icon: 'instant', pressed: true },
];

const noteStrip = ['noteNew', 'noteEdit', 'noteMove', 'notePlus', 'noteLight', 'noteSave', 'noteBox', 'belt'];
const refStrip = ['plane', 'axis', 'triad', 'point', 'com', 'envelope', 'mateRef'];

const treeItems = [
  { text: 'PTC171007A-01-07-04<' },
  { text: '(-) PTC171007A-01-07-0' },
  { text: '(-) PTC171007A-01-0', dim: true },
  { text: 'PTC171007A-01-07-05<' },
  { text: 'PTC171007A-01-07-06<' },
  { text: '(-) PTC171007A-01-07-0' },
  { text: '(-) PTC171007A-01-07-0' },
  { text: 'PTC171007A-01-07-09<' },
  { text: 'PTC171007A-01-07-10<' },
  { text: '(-) PTC171007A-01-07-1' },
  { text: 'PTC171007A-01-07-13<' },
  { text: '(-) 输送带厚2 宽250 周长' },
  { text: 'PTC171007A-01-07-13<' },
  { text: '(-) 02调整脚M16x100L<' },
  { text: 'PTC171007A-01-07-13<' },
  { text: '(-) 02调整脚M16x100L<' },
  { text: 'PTC171007A-01-07-13<' },
  { text: '(-) 02调整脚M16x100L<' },
  { text: 'PTC171007A-01-07-02<' },
  { text: '(-) 02深沟球轴承6001-2Z' },
  { text: '(-) PTC171007A-01-07-1' },
  { text: 'PTC171007A-01-07-06<' },
  { text: '(-) 02深沟球轴承61902-2' },
  { text: '(-) circlips for shaft--typ', icon: 'bolt' },
  { text: '(-) circlips for shaft--typ', icon: 'bolt' },
  { text: '配合', icon: 'mates' },
];

const viewTools = [
  { icon: 'zoomFit' },
  { icon: 'zoomArea' },
  { icon: 'prevView' },
  { icon: 'section' },
  { icon: 'annot' },
  { icon: 'orient', caret: true },
  { icon: 'display', caret: true },
  { icon: 'eye', caret: true },
  { icon: 'appearance' },
  { icon: 'sceneBall', caret: true },
  { icon: 'monitor', caret: true },
];

/* ---------- conveyor model ---------- */

const LIGHT = '#dcd9d6';
const DARK = '#5e5d5c';
const SIDE = '#685d66';

const railBands = [
  [0.05, 0.27, LIGHT],
  [0.31, 0.34, '#6f6c6b'],
  [0.42, 0.6, LIGHT],
  [0.67, 0.78, SIDE],
  [0.87, 0.96, SIDE],
];
const legBands = [
  [0.05, 0.33, DARK],
  [0.45, 0.72, DARK],
  [0.78, 0.84, '#4b474b'],
  [0.89, 0.95, '#4b474b'],
];
const baseBands = [
  [0.05, 0.11, '#a9a7a6'],
  [0.16, 0.24, '#77757a'],
  [0.32, 0.6, DARK],
  [0.67, 0.71, '#a9a7a6'],
  [0.76, 0.97, DARK],
];

// aluminium profile between the edges a-b and c-d, split into coloured bands
function Beam({ a, b, c, d, bands }) {
  const point = (p, q, t) => [p[0] + (q[0] - p[0]) * t, p[1] + (q[1] - p[1]) * t];
  return (
    <g>
      <polygon points={`${a} ${b} ${d} ${c}`} fill="#0d0c0d" stroke="#0d0c0d" />
      {bands.map(([from, to, fill]) => (
        <polygon
          key={from}
          points={`${point(a, b, from)} ${point(a, b, to)} ${point(c, d, to)} ${point(c, d, from)}`}
          fill={fill}
        />
      ))}
      {bands === railBands && (
        <path d={`M${point(a, b, 0.825)}L${point(c, d, 0.825)}`} stroke="#a9a3a8" strokeDasharray="1 3" />
      )}
    </g>
  );
}

const Foot = ({ x, y }) => (
  <g transform={`translate(${x} ${y})`} stroke="#111">
    <path d="M-21-3H10l2 1v3l-3 3h-30Z" fill={LIGHT} />
    <path d="M-5 4H5v3H-5Z" fill="#aaa" />
    <path d="M-4 7h7l1.500 19h-6Z" fill="url(#steel)" />
    <path d="M-12 26v5c2 7 22 7 24 0v-5Z" fill="url(#steel)" />
    <ellipse cx="0" cy="26" rx="12" ry="5.500" fill="#d6d4d5" />
    <path d="M-9 27a9.500 3.500 0 0 0 19-1" fill="none" stroke="#999" />
    <ellipse cx="0" cy="25" rx="5" ry="3" fill="#777" />
    <path d="M-2.500 8h4l1 16h-3Z" fill="#ddd" stroke="none" />
  </g>
);

const Knob = ({ x, y }) => (
  <g transform={`translate(${x} ${y})`}>
    <circle cy="4" r="4.500" fill="#3d8fdb" />
    <circle cy="-2" r="5" fill="#5fb4f5" />
    <circle cx="-1" cy="-3" r="2" fill="#a5dcff" />
    <circle cx="-1" cy="3" r="1.500" fill="#8cc9f7" />
  </g>
);

const ProfileEnd = ({ x, y, w, h }) => (
  <g>
    <rect x={x} y={y} width={w} height={h} fill="#151515" />
    <path
      d={`M${x + 2} ${y + 2}l${w - 4} 1M${x + 1} ${y + 6}l${w - 2} 2M${x + 2} ${y + 11}l${w - 4} 1`}
      stroke="#c4c4c4"
      strokeWidth="1.300"
      strokeDasharray="2 1 1 2 3 2"
    />
  </g>
);

function Conveyor() {
  return (
    <Scene viewBox="333 218 1048 675" preserveAspectRatio="xMinYMin meet" role="img" aria-label="PTC-001 输送机构">
      <defs>
        <linearGradient id="roller" x1="0" y1="0" x2="0" y2="1">
          <stop offset="0" stopColor="#3bb80f" />
          <stop offset=".25" stopColor="#63d33a" />
          <stop offset=".6" stopColor="#1f7a07" />
          <stop offset="1" stopColor="#052c00" />
        </linearGradient>
        <linearGradient id="motor" x1="0" y1="0" x2="0" y2="1">
          <stop offset="0" stopColor="#e8e8e8" />
          <stop offset=".3" stopColor="#fff" />
          <stop offset=".65" stopColor="#fff" />
          <stop offset="1" stopColor="#888" />
        </linearGradient>
        <linearGradient id="steel">
          <stop offset="0" stopColor="#777" />
          <stop offset=".35" stopColor="#ddd" />
          <stop offset=".6" stopColor="#aaa" />
          <stop offset=".8" stopColor="#cbbfca" />
          <stop offset="1" stopColor="#666" />
        </linearGradient>
      </defs>

      <Foot x={951} y={586} />
      <Foot x={1127} y={587} />
      <Beam a={[930, 562]} b={[930, 584]} c={[1139, 564]} d={[1136, 586]} bands={baseBands} />
      <ProfileEnd x={1134} y={568} w={6} h={15} />
      <Beam a={[948, 478]} b={[972, 470]} c={[962, 570]} d={[984, 566]} bands={legBands} />
      <path d="M1037 375 1054 368V385H1037Z" fill={DARK} stroke="#111" />
      <path d="M1038 379h15" stroke="#111" />
      <Beam a={[1051, 350]} b={[1070, 340]} c={[1080, 570]} d={[1101, 567]} bands={legBands} />
      <Beam a={[957, 516]} b={[973, 529]} c={[823, 706]} d={[827, 738]} bands={railBands} />
      <path d="M957 516h14l2 12" fill="none" stroke="#111" strokeWidth="1.500" />
      <Beam a={[1073, 516]} b={[1089, 529]} c={[938, 705]} d={[942, 738]} bands={railBands} />
      <path d="M1073 516h14l2 12" fill="none" stroke="#111" strokeWidth="1.500" />

      <Foot x={797} y={801} />
      <Foot x={974} y={802} />
      <Beam a={[776, 778]} b={[774, 800]} c={[986, 780]} d={[987, 802]} bands={baseBands} />
      <ProfileEnd x={981} y={785} w={6} h={16} />
      <Beam a={[783, 580]} b={[799, 580]} c={[811, 785]} d={[831, 779]} bands={legBands} />
      <Beam a={[907, 640]} b={[928, 640]} c={[926, 786]} d={[947, 781]} bands={legBands} />
      <path d="M799 592H904v8H800Z" fill={DARK} stroke="#111" />
      <path d="M799 594h104" stroke="#111" />

      <path d="M930 325 941 309h8l-12 20-7 3Z" fill="#8f969d" stroke="#111" />
      <path d="M957 323 1054 324 884 565H786Z" fill="#2fad02" stroke="#0b3300" />
      <path d="M958 323.500h95" stroke="#0b1a05" strokeWidth="2" />
      <Beam a={[943, 309]} b={[965, 321]} c={[767, 556]} d={[790, 566]} bands={railBands} />
      <path d="M943 309 948 308.500H962.500V321L956 317Z" fill="#0d0c0d" />
      <path d="M945 311l3-2h4l-3 4M953 315l5-6h3l-4 8" fill={LIGHT} />
      <Beam a={[1063, 311]} b={[1088, 320]} c={[888, 555]} d={[914, 560]} bands={railBands} />
      <path d="M1063 311h17" stroke="#111" />
      <path d="M1068 328 1076 312h7l3 22-13 18h-5Z" fill="#5b5763" stroke="#111" />
      <path d="M1067 328h5l2 23h-5Z" fill="#7d8387" stroke="#111" />
      <path d="M1076 341 1083 332v5l-6 8Z" fill={LIGHT} stroke="#111" />

      <path d="M762 560 768 553 773 554V586L766 589Z" fill="#c9c7c5" stroke="#111" />
      <ProfileEnd x={767} y={564} w={18} h={14} />
      <path d="M763 561h4l3 27-4 1Z" fill="#87837f" stroke="#111" />
      <path d="M882 565h16v23l-10 2-7-4Z" fill="#2fad02" stroke="#111" />
      <path d="M787 563 882 564.500C880 572 880 584 884 590H790C785 586 785 570 787 563Z" fill="url(#roller)" stroke="#0b1a05" />
      <ProfileEnd x={882} y={566} w={16} h={14} />

      <path d="M850 599H884V636H850C841 632 841 603 850 599Z" fill="url(#motor)" stroke="#333" />
      <path d="M850 600c-5 10-5 26 0 35" fill="none" stroke="#222" strokeDasharray="3 1" />
      <path d="M882 608 892 594H904L909 642H886Z" fill="#fff" stroke="#111" />
      <path d="M882 608H904L908 642H886Z" fill="#d0d0d0" stroke="#222" />

      <path d="M900 541 933 542 917 566 883 564Z" fill="#e2dcd6" stroke="#111" />
      <path d="M898 565H917L929 646H908Z" fill="#686461" stroke="#111" />
      <path d="M917 565 934 542 945 622 929 646Z" fill="#6a606a" stroke="#111" />
      <g fill="#111">
        <circle cx="903" cy="545" r="1.500" />
        <circle cx="893" cy="559" r="1.500" />
        <circle cx="918" cy="598" r="1.500" />
        <circle cx="909" cy="611" r="1.500" />
        <circle cx="922" cy="625" r="1.500" />
        <circle cx="913" cy="638" r="1.500" />
      </g>

      <path d="M1019 299 824 578" stroke="#4da3f5" strokeWidth="1.500" />
      <path d="M1022 304 1006 327M829 577l-4 5" stroke="#4da3f5" strokeWidth="1.300" />
      <path d="M1006 327 829 577" stroke="#5fb0e8" strokeDasharray="4 4" />
      <Knob x={1022} y={299} />
      <Knob x={922} y={438} />
      <Knob x={823} y={579} />

      <g fontFamily="Liberation Serif, serif" fontSize="11">
        <text x="373" y="874" fill="#0a8a0a">Y</text>
        <text x="391" y="894" fill="#e01010">Y</text>
      </g>
      <path d="M379 877 385 888 379 891 373 888Z" fill="#1c6b2c" stroke="#0a3a12" />
      <path d="M377 890h4v4h-4Z" fill="#145a20" />
    </Scene>
  );
}

/* ---------- page ---------- */

function RibbonItem({ item }) {
  return (
    <>
      <RibbonButton $width={item.width} $menu={item.menu} $pressed={item.pressed} disabled={item.disabled}>
        <Icon name={item.icon} />
        <RibbonLabel $menu={item.menu}>
          <Mixed text={item.text} size={14} />
        </RibbonLabel>
        {item.menu && <Caret />}
      </RibbonButton>
      {item.sep && <RibbonSeparator />}
    </>
  );
}

function App() {
  const [menuOpen, setMenuOpen] = useState(true);
  const [activeTab, setActiveTab] = useState('装配体');

  return (
    <AppContainer>
      <GlobalStyle />
      <Header>
        <Logo>
          <svg width="28" height="30" viewBox="0 0 28 30" fill="none" stroke="#da291c" aria-hidden="true">
            <path d="M10 3.500C16 .5 20 2.500 16.500 6.500L12 10.500" strokeWidth="2.200" />
            <path d="M8 12.500C20 10 19 18 13 23 9 26.500 5 27.500 1.500 28L8 18" strokeWidth="2.200" />
            <path d="M27 11C21 9.500 16.500 12 19.500 16.500 23 20 27 23.500 21 25.500 18.500 26 16.500 25.500 15 25" strokeWidth="2.600" />
          </svg>
          <LogoText><b>SOLID</b>WORKS</LogoText>
        </Logo>
        <MenuBar>
          {menus.map((m) => <button key={m}>{m}</button>)}
          <PinButton aria-label="固定"><Icon name="pin" /></PinButton>
        </MenuBar>
        <QuickBar>
          <QuickButton aria-label="主页"><Icon name="home" /></QuickButton>
          {quickTools.map((t) => (
            <React.Fragment key={t.icon}>
              <QuickButton aria-label={t.label}><Icon name={t.icon} /></QuickButton>
              <QuickCaret aria-label={t.label}><Caret /></QuickCaret>
            </React.Fragment>
          ))}
          <SelectGroup>
            <QuickButton aria-label="选择"><Icon name="cursor" /></QuickButton>
            <QuickCaret aria-label="选择"><Caret /></QuickCaret>
          </SelectGroup>
          <QuickButton aria-label="重建模型"><Icon name="traffic" /></QuickButton>
          <QuickButton aria-label="文件属性"><Icon name="list" /></QuickButton>
          <QuickButton aria-label="选项"><Icon name="gear" /></QuickButton>
          <QuickCaret aria-label="选项"><Caret /></QuickCaret>
        </QuickBar>
        <DocTitle>PTC-001 输送机构 *</DocTitle>
      </Header>

      <Ribbon>
        {ribbonLeft.map((item) => <RibbonItem key={item.text} item={item} />)}
        <SplitWrap>
          <SplitTop>
            <Icon name="linear" />
            <RibbonLabel $menu>线性零部件阵列</RibbonLabel>
          </SplitTop>
          <SplitBottom aria-label="线性零部件阵列" aria-expanded={menuOpen} onClick={() => setMenuOpen(!menuOpen)}>
            <Caret />
          </SplitBottom>
          {menuOpen && (
            <PatternMenu>
              {patterns.map((p) => (
                <PatternItem key={p.text}>
                  <button><Icon name={p.icon} />{p.text}</button>
                  {p.icon === 'mirror' && <Highlight />}
                </PatternItem>
              ))}
            </PatternMenu>
          )}
        </SplitWrap>
        {ribbonRight.map((item) => <RibbonItem key={item.text} item={item} />)}
      </Ribbon>

      <TabBar>
        {commandTabs.map((t) => (
          <Tab key={t.text} $width={t.width} $active={t.text === activeTab} onClick={() => setActiveTab(t.text)}>
            <Mixed text={t.text} size={16} />
          </Tab>
        ))}
      </TabBar>

      <Body>
        <Strips>
          <StripRow>
            <Strip $width={53}>
              {featureStrip.map((s) => (
                <React.Fragment key={s.icon}>
                  <StripItem $pressed={s.pressed}>
                    <button aria-label={s.icon}><Icon name={s.icon} /></button>
                    {s.caret && <Caret $color={s.caret} />}
                  </StripItem>
                  {s.rule && <StripRule />}
                </React.Fragment>
              ))}
            </Strip>
            <Strip $width={31} $open>
              {noteStrip.map((name) => (
                <StripItem key={name}>
                  <button aria-label={name}><Icon name={name} /></button>
                </StripItem>
              ))}
            </Strip>
          </StripRow>
          <Strip $width={34} $lower>
            {refStrip.map((name) => (
              <StripItem key={name}>
                <button aria-label={name}><Icon name={name} /></button>
              </StripItem>
            ))}
          </Strip>
        </Strips>

        <DocWindow>
          <WindowTitle>
            <Icon name="assembly" />
            <span><Mixed text="PTC-001 输送机构" size={15} /></span>
            <WindowButton aria-label="展开">
              <svg width="14" height="14" viewBox="0 0 14 14" aria-hidden="true">
                <rect x=".5" y=".5" width="13" height="12" fill="#fff" stroke="#333" />
                <path d="M6 3.500H3.500v6H6M8.500 3.500H11v6H8.500Z" fill="none" stroke="#333" strokeWidth="1.500" />
              </svg>
            </WindowButton>
          </WindowTitle>
          <Workspace>
            <Panel>
              <PanelGrip><Dot /></PanelGrip>
              <PanelTabs>
                <PanelTab $active aria-label="特征树"><Icon name="assembly" /></PanelTab>
                <PanelTab aria-label="属性"><Icon name="propTab" /></PanelTab>
                <PanelTab aria-label="配置"><Icon name="configTab" /></PanelTab>
                <PanelTab aria-label="尺寸"><Icon name="dimTab" /></PanelTab>
              </PanelTabs>
              <FilterBar>
                <Icon name="funnel" />
                <Caret />
                <input type="text" aria-label="过滤" />
              </FilterBar>
              <TreeArea>
                <Tree>
                  {treeItems.map((item, i) => (
                    <TreeRow key={i} $dim={item.dim}>
                      <Twisty aria-label="展开" $hidden={item.dim} />
                      <Icon name={item.icon || (item.dim ? 'partGray' : 'part')} />
                      {item.dim && <Icon name="warn" />}
                      <span><Mixed text={item.text} size={15} /></span>
                    </TreeRow>
                  ))}
                </Tree>
                <ScrollTrack><ScrollThumb /></ScrollTrack>
              </TreeArea>
              <PanelHandle aria-label="收起"><Dot /></PanelHandle>
            </Panel>
            <Viewport>
              <ViewBar>
                {viewTools.map((t) => (
                  <React.Fragment key={t.icon}>
                    <button aria-label={t.icon}><Icon name={t.icon} /></button>
                    {t.caret && <Caret $color="#777" />}
                  </React.Fragment>
                ))}
              </ViewBar>
              <Conveyor />
              <Watermark>CSDN @<HanText $size={20}>技术死肥仔</HanText></Watermark>
            </Viewport>
          </Workspace>
        </DocWindow>
      </Body>
    </AppContainer>
  );
}

export default App;
